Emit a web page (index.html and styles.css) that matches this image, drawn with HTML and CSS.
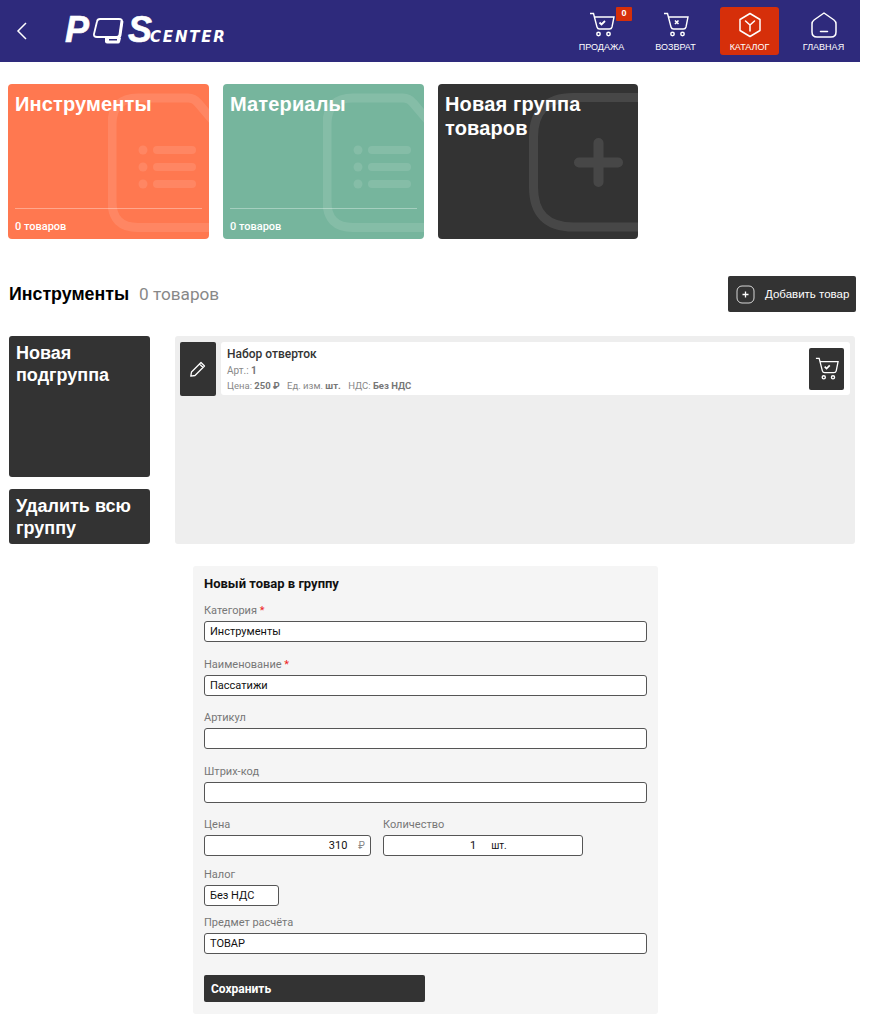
FILE: index.html
```html
<!DOCTYPE html>
<html lang="ru">
<head>
	<meta charset="UTF-8">
	<title>Каталог</title>
	<link rel="stylesheet" href="styles.css">
</head>
<body>
	<div id="page">
		<div id="top">
			<svg class="back" width="12" height="20" viewBox="0 0 12 20"><path d="M10 2L2 10l8 8" fill="none" stroke="#fff" stroke-width="1.5"/></svg>
			<div class="logo">
				<span class="logo-big">P</span>
				<svg class="logo-pc" width="32" height="27" viewBox="0 0 32 27">
					<path d="M7 2H26q3.500 0 3 3L27 17q-.5 3-3.500 3H4q-3.500 0-3-3L4 4.500Q4.500 2 7 2z" fill="none" stroke="#fff" stroke-width="1.800"/>
					<path d="M29 4l-2 14q-.5 3-3 3" fill="none" stroke="#fff" stroke-width="3"/>
					<path d="M12 21h16l-1 4q-.5 1.500-2 1.500H14q-2 0-2-2z" fill="#fff"/>
					<path d="M16 22h8v1.500h-8z" fill="#2e2a7c"/>
				</svg>
				<span class="logo-big logo-s">S</span>
				<span class="logo-small">CENTER</span>
			</div>
			<ul class="nav">
				<li>
					<svg width="26" height="26" viewBox="0 0 26 26"><use href="#cart"/><path d="M10.500 10.500l2 2 3.500-3.500" fill="none" stroke="#fff" stroke-width="1.800"/></svg>
					<span>ПРОДАЖА</span>
					<b class="badge">0</b>
				</li>
				<li>
					<svg width="26" height="26" viewBox="0 0 26 26"><use href="#cart"/><path d="M12 8.500l3.500 3.500m0-3.500L12 12" fill="none" stroke="#fff" stroke-width="1.600"/></svg>
					<span>ВОЗВРАТ</span>
				</li>
				<li class="active">
					<svg width="26" height="26" viewBox="0 0 26 26" fill="none" stroke="#fff" stroke-width="1.500"><path d="M13 1.500l10 6v11l-10 6-10-6v-11z" stroke-linejoin="round"/><path d="M8.500 9l4.500 4 4.500-4M13 13v6" stroke-linecap="round"/></svg>
					<span>КАТАЛОГ</span>
				</li>
				<li>
					<svg width="26" height="26" viewBox="0 0 26 26" fill="none" stroke="#fff" stroke-width="1.500"><path d="M13 1L23 8q2 1.500 2 4v8q0 5-5 5H6q-5 0-5-5v-8q0-2.500 2-4z" stroke-linejoin="round"/><path d="M9.500 19.500h7" stroke-linecap="round"/></svg>
					<span>ГЛАВНАЯ</span>
				</li>
			</ul>
		</div>

		<svg class="defs" width="0" height="0">
			<defs>
				<g id="cart" fill="none" stroke="#fff" stroke-width="1.400">
					<path d="M1 1.500h3.500L8 15q.5 2 2.500 2h10q2 0 2.500-2L25 5H5"/>
					<circle cx="9.500" cy="22" r="1.700" stroke-width="1.500"/>
					<circle cx="19.500" cy="22" r="1.700" stroke-width="1.500"/>
				</g>
			</defs>
		</svg>

		<div class="groups">
			<div class="card orange">
				<svg class="mark" width="101" height="155" viewBox="0 0 101 155">
					<path d="M4 40q0-26 26-26h50q6 0 10 5l24 28v96.500H30q-26 0-26-26z" fill="none" stroke="#fff" stroke-opacity=".11" stroke-width="9"/>
					<g fill="#fff" fill-opacity=".11">
						<circle cx="35" cy="66" r="4.500"/><circle cx="35" cy="83" r="4.500"/><circle cx="35" cy="100" r="4.500"/>
						<rect x="45" y="62" width="43" height="8" rx="4"/><rect x="45" y="79" width="43" height="8" rx="4"/><rect x="45" y="96" width="43" height="8" rx="4"/>
					</g>
				</svg>
				<h3>Инструменты</h3>
				<div class="count">0 товаров</div>
			</div>
			<div class="card green">
				<svg class="mark" width="101" height="155" viewBox="0 0 101 155">
					<path d="M4 40q0-26 26-26h50q6 0 10 5l24 28v96.500H30q-26 0-26-26z" fill="none" stroke="#fff" stroke-opacity=".11" stroke-width="9"/>
					<g fill="#fff" fill-opacity=".11">
						<circle cx="35" cy="66" r="4.500"/><circle cx="35" cy="83" r="4.500"/><circle cx="35" cy="100" r="4.500"/>
						<rect x="45" y="62" width="43" height="8" rx="4"/><rect x="45" y="79" width="43" height="8" rx="4"/><rect x="45" y="96" width="43" height="8" rx="4"/>
					</g>
				</svg>
				<h3>Материалы</h3>
				<div class="count">0 товаров</div>
			</div>
			<div class="card dark">
				<svg class="mark" width="110" height="155" viewBox="0 0 110 155">
					<path d="M5.500 53.500q0-40 40-40h80v129.500h-80q-40 0-40-40z" fill="none" stroke="#fff" stroke-opacity=".1" stroke-width="9"/>
					<path d="M70.500 59v39M51 78.500h39" stroke="#fff" stroke-opacity=".1" stroke-width="10" stroke-linecap="round"/>
				</svg>
				<h3>Новая группа товаров</h3>
			</div>
		</div>

		<div class="title-row">
			<h2>Инструменты</h2>
			<span class="title-count">0 товаров</span>
			<button class="add-btn">
				<svg width="19" height="19" viewBox="0 0 19 19" fill="none" stroke="#fff"><rect x="1" y="1" width="17" height="17" rx="5" stroke-opacity=".8"/><path d="M9.500 6.500v6M6.500 9.500h6" stroke-width="1.300"/></svg>
				Добавить товар
			</button>
		</div>

		<div class="work">
			<div class="side">
				<div class="side-btn new">Новая подгруппа</div>
				<div class="side-btn">Удалить всю группу</div>
			</div>
			<div class="items">
				<div class="item-row">
					<div class="edit">
						<svg width="18" height="18" viewBox="0 0 18 18" fill="none" stroke="#fff" stroke-width="1.300"><path d="M12 2.500l3.500 3.500L6 15.500l-4.200.7.700-4.200zM10.500 4l3.500 3.500" stroke-linejoin="round"/></svg>
					</div>
					<div class="item">
						<div class="item-info">
							<div class="item-name">Набор отверток</div>
							<div class="item-art">Арт.: <b>1</b></div>
							<div class="item-meta">Цена: <b>250 ₽</b> <i>Ед. изм. <b>шт.</b></i> <i>НДС: <b>Без НДС</b></i></div>
						</div>
						<div class="item-cart">
							<svg width="24" height="24" viewBox="0 0 26 26"><use href="#cart"/><path d="M10.500 10.500l2 2 3.500-3.500" fill="none" stroke="#fff" stroke-width="1.800"/></svg>
						</div>
					</div>
				</div>
			</div>
		</div>

		<div class="form">
			<h4>Новый товар в группу</h4>
			<div class="field">
				<label>Категория <em>*</em></label>
				<div class="input">Инструменты</div>
			</div>
			<div class="field">
				<label>Наименование <em>*</em></label>
				<div class="input">Пассатижи</div>
			</div>
			<div class="field">
				<label>Артикул</label>
				<div class="input"></div>
			</div>
			<div class="field">
				<label>Штрих-код</label>
				<div class="input"></div>
			</div>
			<div class="field pair">
				<div class="price">
					<label>Цена</label>
					<div class="input right">310<span class="unit">₽</span></div>
				</div>
				<div class="qty">
					<label>Количество</label>
					<div class="input center">1<span class="unit-qty">шт.</span></div>
				</div>
			</div>
			<div class="field tax">
				<label>Налог</label>
				<div class="input small">Без НДС</div>
			</div>
			<div class="field">
				<label>Предмет расчёта</label>
				<div class="input">ТОВАР</div>
			</div>
			<button class="save">Сохранить</button>
		</div>
	</div>
</body>
</html>
```

FILE: styles.css
```css
*{
	margin: 0;
	padding: 0;
	box-sizing: border-box;
	list-style: none;
}
body{
	background: #fff;
	font-family: "Roboto", "Liberation Sans", sans-serif;
	color: #000;
}
#page{
	width: 860px;
}
#top{
	display: flex;
	align-items: center;
	height: 62px;
	padding: 0 7px 0 16px;
	background: #2e2a7c;
}
.back{
	margin-right: 37px;
}
.logo{
	display: flex;
	align-items: flex-end;
	height: 30px;
	color: #fff;
	font-weight: bold;
	font-style: italic;
}
.logo-big{
	font-family: "Liberation Sans", sans-serif;
	font-size: 36px;
	line-height: 33px;
	-webkit-text-stroke: .6px #fff;
}
.logo-pc{
	margin: 0 0 2px 4px;
}
.logo-s{
	margin-left: 3px;
}
.logo-small{
	margin-left: -2px;
	font-family: "DejaVu Sans", sans-serif;
	font-size: 15px;
	line-height: 17px;
	letter-spacing: 1.800px;
}
.nav{
	display: flex;
	gap: 15px;
	margin-left: auto;
}
.nav li{
	position: relative;
	display: flex;
	flex-direction: column;
	align-items: center;
	width: 59px;
	height: 48px;
	padding-top: 5px;
	border-radius: 3px;
	color: #fff;
	font-family: "Liberation Sans", sans-serif;
	font-size: 9px;
}
.nav li span{
	margin-top: 4px;
	white-space: nowrap;
}
.nav li.active{
	background: #d62f0a;
}
.badge{
	position: absolute;
	top: 0;
	right: -1px;
	width: 16px;
	height: 14px;
	background: #d62f0a;
	border-radius: 1px;
	text-align: center;
	font-size: 9px;
	line-height: 13px;
}
.defs{
	position: absolute;
}
.groups{
	display: flex;
	gap: 14px;
	padding: 22px 0 0 8px;
}
.card{
	position: relative;
	display: flex;
	flex-direction: column;
	width: 201px;
	height: 155px;
	padding: 8px 7px 7px;
	border-radius: 4px;
	overflow: hidden;
	color: #fff;
}
.card.orange{
	background: #ff7850;
}
.card.green{
	background: #76b59d;
}
.card.dark{
	width: 200px;
	background: #333;
}
.mark{
	position: absolute;
	right: 0;
	top: 0;
}
.card h3{
	position: relative;
	font-family: "Liberation Sans", sans-serif;
	font-size: 20px;
	line-height: 24px;
	font-weight: bold;
	letter-spacing: .15px;
}
.count{
	position: relative;
	margin-top: auto;
	height: 24px;
	padding-top: 11px;
	border-top: 1px solid rgba(255,255,255,.35);
	font-size: 11px;
	font-weight: 500;
	line-height: 13px;
}
.title-row{
	display: flex;
	align-items: center;
	height: 36px;
	margin-top: 37px;
	padding: 0 4px 0 9px;
}
.title-row h2{
	font-family: "Liberation Sans", sans-serif;
	font-size: 17.800px;
	font-weight: bold;
}
.title-count{
	margin-left: 10px;
	color: #888;
	font-size: 17.200px;
}
.add-btn{
	display: flex;
	align-items: center;
	gap: 10px;
	width: 128px;
	height: 36px;
	margin-left: auto;
	padding-left: 8px;
	border: 0;
	border-radius: 2px;
	background: #333;
	color: #fff;
	font-family: "Liberation Sans", sans-serif;
	font-size: 11.500px;
	white-space: nowrap;
}
.work{
	display: flex;
	gap: 25px;
	margin-top: 24px;
	padding: 0 5px 0 9px;
}
.side{
	display: flex;
	flex-direction: column;
	gap: 12px;
	width: 141px;
}
.side-btn{
	height: 55px;
	padding: 6px 7px;
	border-radius: 3px;
	background: #333;
	color: #fff;
	font-family: "Liberation Sans", sans-serif;
	font-size: 18px;
	font-weight: bold;
	line-height: 22px;
}
.side-btn.new{
	height: 141px;
}
.items{
	flex: 1;
	height: 208px;
	padding: 6px 5px;
	border-radius: 3px;
	background: #eee;
}
.item-row{
	display: flex;
	gap: 5px;
}
.edit{
	display: flex;
	align-items: center;
	justify-content: center;
	width: 36px;
	height: 54px;
	border-radius: 2px;
	background: #333;
}
.item{
	flex: 1;
	display: flex;
	align-items: center;
	justify-content: space-between;
	height: 53px;
	padding: 0 6px;
	border-radius: 3px;
	background: #fff;
}
.item-name{
	font-size: 12px;
	font-weight: 500;
	line-height: 14px;
	color: #333;
}
.item-art{
	margin-top: 4px;
	font-size: 10px;
	line-height: 12px;
	color: #888;
}
.item-meta{
	margin-top: 3px;
	font-size: 9.500px;
	line-height: 11px;
	color: #888;
}
.item-meta b, .item-art b{
	color: #777;
}
.item-meta i{
	font-style: normal;
	margin-left: 5px;
}
.item-cart{
	display: flex;
	align-items: center;
	justify-content: center;
	width: 35px;
	height: 42px;
	border-radius: 2px;
	background: #333;
}
.form{
	width: 465px;
	height: 448px;
	margin: 22px 0 0 193px;
	padding: 11px 11px 0;
	border-radius: 3px;
	background: #f5f5f5;
}
.form h4{
	font-size: 13px;
	font-weight: bold;
	line-height: 14px;
	margin-bottom: 14px;
	color: #111;
}
.field{
	height: 53.500px;
}
.field label{
	display: block;
	height: 16px;
	color: #777;
	font-size: 11px;
	line-height: 12px;
}
.field em{
	color: #e22;
	font-style: normal;
}
.input{
	width: 443px;
	height: 21px;
	padding: 0 5px;
	border: 1px solid #555;
	border-radius: 3px;
	background: #fff;
	font-size: 11px;
	line-height: 19px;
	color: #111;
}
.pair{
	display: flex;
	gap: 12px;
	height: 50px;
}
.price .input{
	width: 167px;
	text-align: right;
}
.unit{
	margin: 0 0 0 11px;
	color: #888;
	font-size: 10px;
}
.qty .input{
	width: 200px;
	padding-left: 86px;
}
.unit-qty{
	margin-left: 15px;
	font-size: 10px;
}
.tax{
	height: 48px;
}
.input.small{
	width: 75px;
}
.save{
	display: block;
	width: 221px;
	height: 27px;
	margin-top: 4px;
	padding: 1px 0 0 7px;
	border: 0;
	border-radius: 2px;
	background: #333;
	color: #fff;
	font-family: "Roboto", "Liberation Sans", sans-serif;
	font-size: 12px;
	font-weight: bold;
	text-align: left;
}
```
